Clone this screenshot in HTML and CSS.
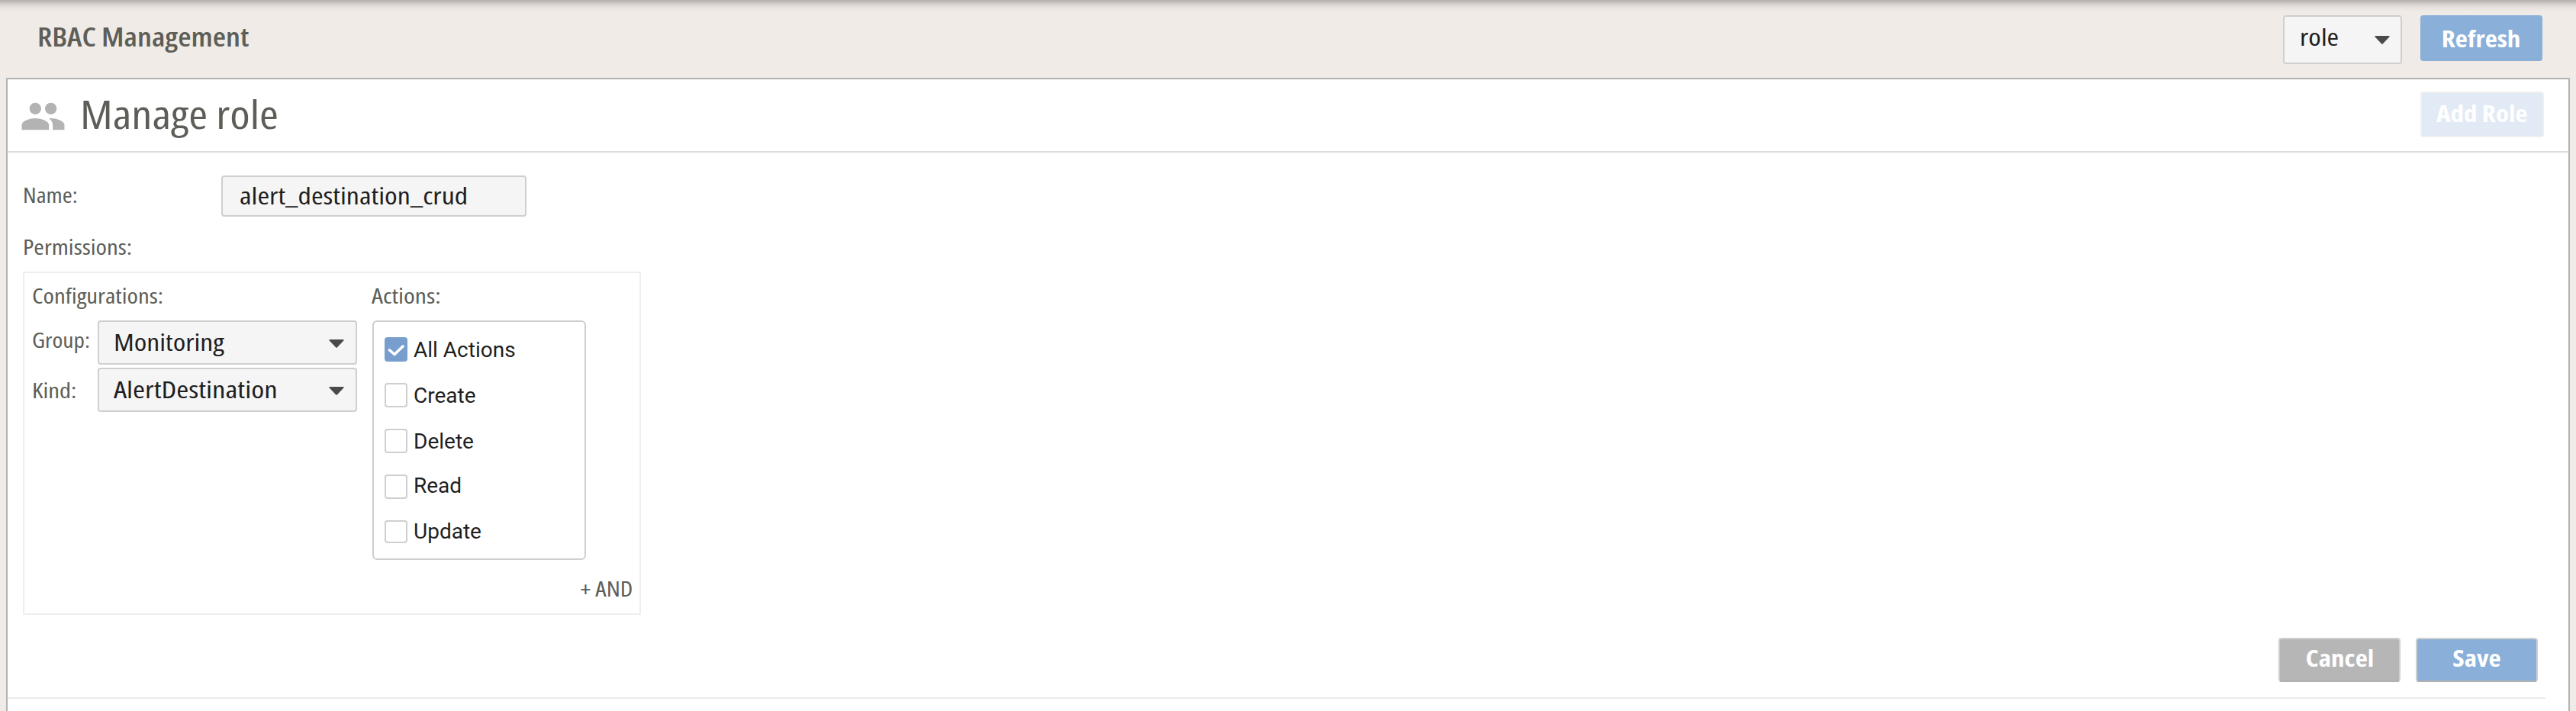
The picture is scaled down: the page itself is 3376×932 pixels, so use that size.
FILE: index.html
```
<!DOCTYPE html>
<html lang="en">
<head>
<meta charset="utf-8">
<title>RBAC Management</title>
<link rel="stylesheet" href="styles.css">
</head>
<body>
<header class="topbar">
  <h1 class="page-title"><span class="t t-page">RBAC Management</span></h1>
  <div class="select select-type"><span class="t">role</span><svg class="caret" viewBox="0 0 20 11"><path d="M1.2 0h17.6q1.6 0 .5 1.4L11 10.2q-1 1-2 0L.7 1.4Q-.4 0 1.2 0z"/></svg></div>
  <button class="btn btn-refresh"><span class="t">Refresh</span></button>
</header>
<main class="panel">
  <div class="panel-head">
    <svg class="people" viewBox="0 0 24 24"><path d="M16 11c1.66 0 2.99-1.34 2.99-3S17.66 5 16 5s-3 1.34-3 3 1.34 3 3 3zm-8 0c1.66 0 2.99-1.34 2.99-3S9.66 5 8 5 5 6.34 5 8s1.34 3 3 3zm0 2c-2.33 0-7 1.17-7 3.5V19h14v-2.500c0-2.330-4.670-3.500-7-3.500zm8 0c-.29 0-.62.02-.97.05 1.160.84 1.970 1.970 1.970 3.450V19h6v-2.500c0-2.330-4.670-3.500-7-3.500z"/></svg>
    <h2 class="panel-title"><span class="t t-title">Manage role</span></h2>
    <button class="btn btn-add" disabled><span class="t">Add Role</span></button>
  </div>
  <section class="form">
    <div class="name-row">
      <div class="label name-label"><span class="t t-narrow">Name:</span></div>
      <div class="input"><span class="t t-input">alert_destination_crud</span></div>
    </div>
    <div class="label perm-label"><span class="t">Permissions:</span></div>
    <div class="permissions">
      <div class="columns">
        <div class="config">
          <div class="label heading"><span class="t">Configurations:</span></div>
          <div class="field">
            <div class="label group-label"><span class="t t-narrow">Group:</span></div>
            <div class="select"><span class="t">Monitoring</span><svg class="caret" viewBox="0 0 20 11"><path d="M1.2 0h17.6q1.6 0 .5 1.4L11 10.2q-1 1-2 0L.7 1.4Q-.4 0 1.2 0z"/></svg></div>
          </div>
          <div class="field">
            <div class="label kind-label"><span class="t">Kind:</span></div>
            <div class="select"><span class="t t-wide">AlertDestination</span><svg class="caret" viewBox="0 0 20 11"><path d="M1.2 0h17.6q1.6 0 .5 1.4L11 10.2q-1 1-2 0L.7 1.4Q-.4 0 1.2 0z"/></svg></div>
          </div>
        </div>
        <div class="actions">
          <div class="label heading actions-heading"><span class="t t-wide">Actions:</span></div>
          <div class="action-list">
            <div class="action"><span class="check checked"><svg viewBox="0 0 30 32"><path d="M6.500 17 13 22.500 24 12"/></svg></span><span>All Actions</span></div>
            <div class="action"><span class="check"></span><span>Create</span></div>
            <div class="action"><span class="check"></span><span>Delete</span></div>
            <div class="action raised"><span class="check"></span><span>Read</span></div>
            <div class="action raised"><span class="check short"></span><span>Update</span></div>
          </div>
        </div>
      </div>
      <div class="label and"><span class="t t-and">+ AND</span></div>
    </div>
    <div class="form-buttons">
      <button class="btn btn-cancel"><span class="t">Cancel</span></button>
      <button class="btn btn-save"><span class="t">Save</span></button>
    </div>
  </section>
</main>
</body>
</html>
```
FILE: styles.css
```
* { box-sizing: border-box; }
body {
  margin: 0;
  height: 932px;
  overflow: hidden;
  background: #f0ebe7;
  color: #5d5e58;
  font-family: "Open Sans", "Noto Sans", sans-serif;
  font-stretch: 75%;
  white-space: nowrap;
}
h1, h2 { margin: 0; }
.t { display: inline-block; transform: scaleX(1.215); transform-origin: 0 50%; }
.t-page { transform: scaleX(1.137); }
.t-title { transform: scaleX(1.178); }
.t-narrow { transform: scaleX(1.165); }
.t-wide { transform: scaleX(1.248); }
.t-input { transform: scaleX(1.225); }
.t-and { transform: scaleX(1.200); transform-origin: 100% 50%; }
.btn .t { transform: scaleX(1.135); transform-origin: 50% 50%; }
.topbar {
  display: flex;
  align-items: flex-start;
  height: 102px;
  padding: 20px 44px 0 49px;
  background: linear-gradient(#b3aeab 0, #c6c1be 3px, #d9d4d1 6px, #e7e2de 10px, #eee9e5 14px, #f0ebe7 18px);
}
.page-title { flex: 1; font-size: 35px; line-height: 55px; font-weight: 600; }
.select {
  display: flex;
  justify-content: space-between;
  width: 340px;
  height: 58px;
  padding: 0 15px 0 19px;
  border: 2px solid #cfcfcf;
  border-radius: 4px;
  background: #f5f5f5;
  color: #1f1f1f;
  font-size: 31px;
  line-height: 52px;
}
.caret { width: 20px; height: 11px; margin-top: 22.500px; fill: #4a4a4a; }
.select-type { width: 156px; height: 64px; margin-right: 24px; padding: 0 14px 0 20px; }
.select-type .caret { margin-top: 24.500px; }
.btn {
  width: 160px;
  height: 60px;
  padding: 0;
  border: 0;
  border-radius: 4px;
  background: #8aafd9;
  color: #fff;
  font-family: inherit;
  font-size: 31px;
  font-weight: 700;
  font-stretch: 75%;
  line-height: 60px;
  text-align: center;
}
.panel {
  height: 840px;
  margin: 0 8px;
  border: 2px solid #b3b3b3;
  background: #fff;
}
.panel-head {
  display: flex;
  align-items: flex-start;
  height: 96px;
  padding: 0 32px 0 15.500px;
  border-bottom: 2px solid #dcdcdc;
}
.people { width: 61px; height: 61px; margin-top: 18px; fill: #b3b3b3; }
.panel-title {
  flex: 1;
  margin-left: 18px;
  font-size: 51px;
  line-height: 90px;
  font-weight: 400;
}
.btn-add {
  width: 162px;
  margin-top: 16px;
  border: 2px solid #efefef;
  background: #e2eaf6;
  line-height: 52px;
  padding-bottom: 4px;
}
.form {
  width: 3326px;
  height: 716px;
  padding: 30px 10px 0 20px;
  border-bottom: 2px solid #ebebeb;
}
.label { font-size: 27px; }
.name-row { display: flex; height: 54px; }
.name-label { width: 260px; line-height: 51px; }
.input {
  width: 400px;
  padding-left: 22px;
  border: 2px solid #cfcfcf;
  border-radius: 4px;
  background: #f5f5f5;
  color: #1f1f1f;
  font-size: 31px;
  line-height: 48px;
}
.perm-label { height: 72px; padding-top: 7px; line-height: 65px; }
.permissions {
  width: 810px;
  height: 450px;
  padding: 0 9px 0 10px;
  border: 2px solid #eee;
}
.columns { display: flex; gap: 20px; }
.heading { height: 62px; line-height: 59px; }
.actions-heading { margin-left: -1px; }
.field { display: flex; margin-bottom: 4px; }
.group-label { width: 86px; line-height: 51px; }
.kind-label { width: 86px; line-height: 59px; }
.action-list {
  width: 280px;
  height: 314px;
  padding: 20px 14px 0;
  border: 2px solid #cfcfcf;
  border-radius: 6px;
}
.action {
  display: flex;
  gap: 8px;
  height: 60px;
  color: #1f1f1f;
  font: 28px/33px Roboto, sans-serif;
}
.raised { line-height: 29px; }
.check { width: 30px; height: 32px; border: 2px solid #cfcfcf; border-radius: 4px; }
.short { height: 30px; }
.checked { border: 0; background: #779ecd; }
.checked svg {
  display: block;
  width: 30px;
  height: 32px;
  fill: none;
  stroke: #fff;
  stroke-width: 3.600px;
  stroke-linecap: round;
  stroke-linejoin: round;
}
.and { line-height: 75px; text-align: right; }
.form-buttons { display: flex; justify-content: flex-end; gap: 20px; margin-top: 30px; }
.form-buttons .btn {
  height: 58px;
  padding-bottom: 6px;
  border: 2px solid #cfcfcf;
  border-bottom-color: #b0b0b0;
  line-height: 48px;
}
.form-buttons .btn-cancel { background: #b6b6b6; }
```
